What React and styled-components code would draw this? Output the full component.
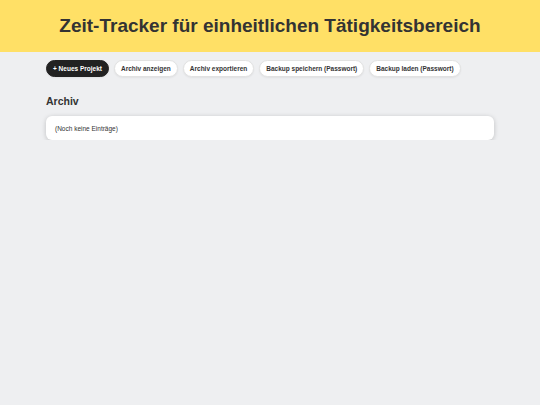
import styled, { createGlobalStyle } from "styled-components";

const GlobalStyle = createGlobalStyle`
  html, body {
    margin: 0;
    padding: 0;
    background: #eeeff1;
    font-family: "Liberation Sans", Arial, sans-serif;
    color: #333;
  }
`;

const Header = styled.header`
  background: #ffe066;
  height: 52px;
  display: flex;
  align-items: center;
  justify-content: center;
`;

const Title = styled.h1`
  margin: 0;
  font-size: 19px;
  font-weight: 700;
  color: #333;
`;

const Main = styled.main`
  width: 448px;
  margin: 0 auto;
  padding-top: 8px;
`;

const Toolbar = styled.div`
  display: flex;
  gap: 5px;
  align-items: center;
`;

const Button = styled.button`
  font-family: inherit;
  font-size: 6.5px;
  font-weight: 700;
  height: 17px;
  padding: 0 6px;
  border-radius: 9px;
  border: 1px solid ${({ $primary }) => ($primary ? "#222" : "#e2e2e2")};
  background: ${({ $primary }) => ($primary ? "#222" : "#fff")};
  color: ${({ $primary }) => ($primary ? "#fff" : "#333")};
  box-shadow: 0 1px 2px rgba(0, 0, 0, 0.06);
  cursor: pointer;
  white-space: nowrap;
`;

const SectionTitle = styled.h2`
  font-size: 10.5px;
  font-weight: 700;
  margin: 18px 0 9px;
  color: #333;
`;

const Card = styled.div`
  background: #fff;
  border-radius: 6px;
  box-shadow: 0 1px 5px rgba(0, 0, 0, 0.2);
  height: 24px;
  padding: 0 9px;
  display: flex;
  align-items: center;
  font-size: 6.5px;
  color: #333;
`;

export default function App() {
  return (
    <>
      <GlobalStyle />
      <Header>
        <Title>Zeit-Tracker für einheitlichen Tätigkeitsbereich</Title>
      </Header>
      <Main>
        <Toolbar>
          <Button $primary>+ Neues Projekt</Button>
          <Button>Archiv anzeigen</Button>
          <Button>Archiv exportieren</Button>
          <Button>Backup speichern (Passwort)</Button>
          <Button>Backup laden (Passwort)</Button>
        </Toolbar>
        <SectionTitle>Archiv</SectionTitle>
        <Card>(Noch keine Einträge)</Card>
      </Main>
    </>
  );
}
